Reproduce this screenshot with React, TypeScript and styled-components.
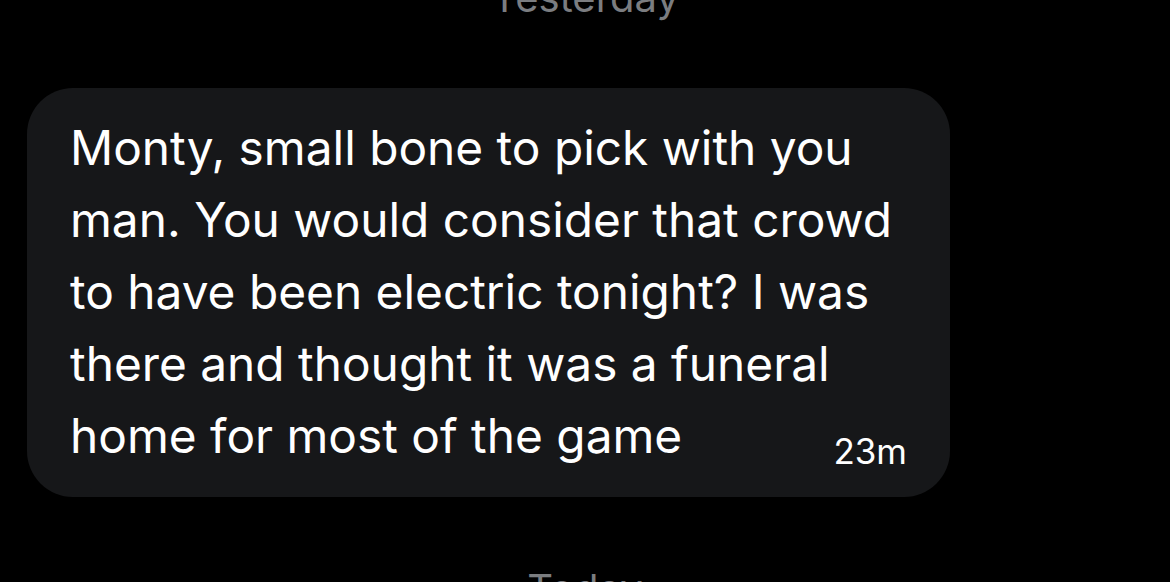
import styled, { createGlobalStyle } from 'styled-components';

const GlobalStyle = createGlobalStyle`
  html, body {
    margin: 0;
    padding: 0;
    background: #000000;
    overflow: hidden;
  }
`;

const App = () => {
  return (
    <Page>
      <GlobalStyle />
      <DateLabel $top>Yesterday</DateLabel>
      <MessageRow>
        <Bubble>
          <MessageText>
            Monty, small bone to pick with you man. You would consider that
            crowd to have been electric tonight? I was there and thought it
            was a funeral home for most of the game
          </MessageText>
          <Time>23m</Time>
        </Bubble>
      </MessageRow>
      <DateLabel>Today</DateLabel>
    </Page>
  );
};

export default App;

// Styled Components
const Page = styled.div`
  width: 1170px;
  height: 582px;
  display: flex;
  flex-direction: column;
  align-items: stretch;
  background: #000000;
  font-family: Inter, 'Noto Sans', sans-serif;
  overflow: hidden;
`;

const DateLabel = styled.div<{ $top?: boolean }>`
  height: 40px;
  margin-top: ${(p) => (p.$top ? '-22px' : '72px')};
  text-align: center;
  color: #7b7d80;
  font-size: 40px;
  line-height: 40px;
`;

const MessageRow = styled.div`
  display: flex;
  padding-left: 27px;
  margin-top: 70px;
`;

const Bubble = styled.div`
  width: 923px;
  height: 409px;
  box-sizing: border-box;
  position: relative;
  padding: 24px 40px 0 43px;
  background: #161719;
  border-radius: 46px;
`;

const MessageText = styled.p`
  margin: 0;
  width: 850px;
  color: #ffffff;
  font-size: 47.8px;
  line-height: 72px;
`;

const Time = styled.span`
  position: absolute;
  right: 43px;
  bottom: 25px;
  color: #ffffff;
  font-size: 35px;
`;
